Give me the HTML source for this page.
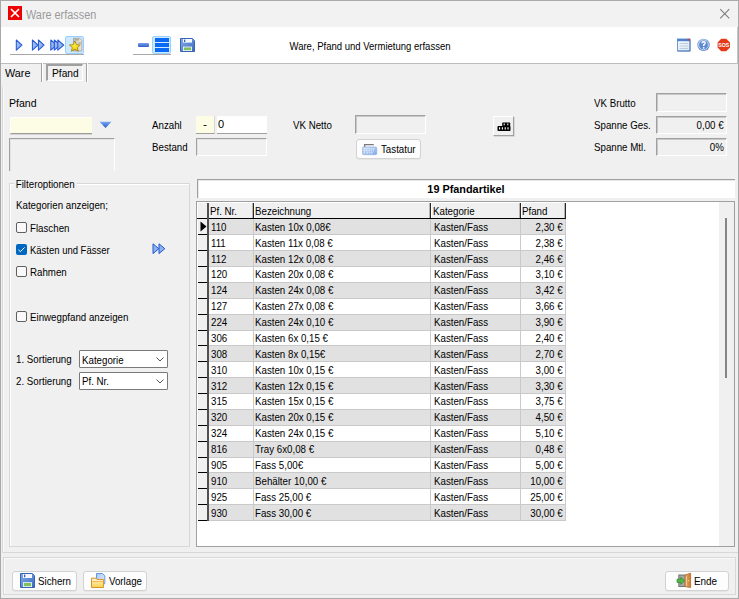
<!DOCTYPE html>
<html><head><meta charset="utf-8">
<style>
*{box-sizing:border-box;margin:0;padding:0}
html,body{width:739px;height:599px;overflow:hidden;background:#f0f0f0;font-family:"Liberation Sans",sans-serif;font-size:11px;color:#000}
.a{position:absolute}
.t{position:absolute;white-space:nowrap;line-height:13px;transform:scaleX(0.884);transform-origin:0 0}
.t.r{transform-origin:100% 0}
.t.c{transform-origin:50% 0}
.cb{position:absolute;width:11px;height:11px;border:1px solid #606060;border-radius:2px;background:#f9f9f9}
</style></head><body>
<div class="a" style="left:0;top:0;width:739px;height:599px;border:1px solid #a9a9a9"></div>
<!-- title bar -->
<div class="a" style="left:1px;top:1px;width:737px;height:26px;background:#f2f2f2"></div>

<div class="a" style="left:8px;top:6px;width:14px;height:14px;background:#ee0000"></div>

<svg class="a" style="left:8px;top:6px" width="14" height="14"><path d="M3 3 L11 11 M11 3 L3 11" stroke="#fff" stroke-width="1.7"/></svg>
<div class="t" style="left:26px;top:8px;font-size:12px;line-height:14px;color:#9a9a9a;transform:scaleX(0.905)">Ware erfassen</div>
<svg class="a" style="left:719px;top:8px" width="12" height="12"><path d="M1.2 1.2 L10.3 10.3 M10.3 1.2 L1.2 10.3" stroke="#7c7c7c" stroke-width="1.05"/></svg>
<!-- toolbar -->
<div class="a" style="left:1px;top:27px;width:737px;height:37px;background:#fff;border-bottom:1px solid #bdbdbd"></div>

<div class="a" style="left:10px;top:54px;width:74px;height:1px;background:#a8a8a8"></div>

<div class="a" style="left:133px;top:54px;width:38px;height:1px;background:#a8a8a8"></div>

<div class="a" style="left:65px;top:36px;width:19px;height:18px;background:#cde8ff;border:1px solid #9ad2ff;border-radius:2px"></div>

<div class="a" style="left:152px;top:36px;width:19px;height:18px;background:#cde8ff;border:1px solid #9ad2ff;border-radius:2px"></div>

<div class="a" style="left:138px;top:43px;width:11px;height:4px;background:linear-gradient(#7aa0e8,#2d60c8);border-radius:1px"></div>

<div class="a" style="left:155px;top:38px;width:14px;height:4px;background:#0a6af5"></div>

<div class="a" style="left:155px;top:43px;width:14px;height:4px;background:#0a6af5"></div>

<div class="a" style="left:155px;top:48px;width:14px;height:4px;background:#0a6af5"></div>


<svg class="a" style="left:0;top:0" width="200" height="60">
 <defs>
  <linearGradient id="ag" x1="0" y1="0" x2="1" y2="1"><stop offset="0" stop-color="#b4cdf6"/><stop offset="1" stop-color="#6e98e6"/></linearGradient>
 </defs>
 <path d="M16.3 40 L22.0 45.1 L16.3 50.2 Z" fill="url(#ag)" stroke="#2458d4" stroke-width="1.05" stroke-linejoin="round"/>
 <path d="M32.4 40 L38.1 45.1 L32.4 50.2 Z" fill="url(#ag)" stroke="#2458d4" stroke-width="1.05" stroke-linejoin="round"/><path d="M38.4 40 L44.099999999999994 45.1 L38.4 50.2 Z" fill="url(#ag)" stroke="#2458d4" stroke-width="1.05" stroke-linejoin="round"/>
 <path d="M50.800000000000004 40 L56.800000000000004 45.1 L50.800000000000004 50.2 Z" fill="url(#ag)" stroke="#2458d4" stroke-width="1.05" stroke-linejoin="round"/><path d="M54.300000000000004 40 L60.300000000000004 45.1 L54.300000000000004 50.2 Z" fill="url(#ag)" stroke="#2458d4" stroke-width="1.05" stroke-linejoin="round"/><path d="M57.800000000000004 40 L63.800000000000004 45.1 L57.800000000000004 50.2 Z" fill="url(#ag)" stroke="#2458d4" stroke-width="1.05" stroke-linejoin="round"/>
</svg>

<svg class="a" style="left:66px;top:36px" width="18" height="18">
 <defs><linearGradient id="sg" x1="0" y1="0" x2="0" y2="1"><stop offset="0" stop-color="#fff46a"/><stop offset="1" stop-color="#f0d000"/></linearGradient>
 <linearGradient id="dg" x1="0" y1="0" x2="1" y2="0"><stop offset="0" stop-color="#c8c0b4"/><stop offset="1" stop-color="#eee8de"/></linearGradient></defs>
 <path d="M7.5 2.2 L13.8 2.2 L15.8 4.2 L15.8 15 L7.5 15 Z" fill="url(#dg)" stroke="#9a948a" stroke-width="0.7"/>
 <path d="M9 3.8 L13 3.8 M12.5 7 L15 7" stroke="#8a8478" stroke-width="0.8"/>
 <path d="M8.8 5 L10.4 8.6 L14.2 9 L11.3 11.5 L12.2 15.2 L8.8 13.3 L5.4 15.2 L6.3 11.5 L3.4 9 L7.2 8.6 Z" fill="url(#sg)" stroke="#a08000" stroke-width="0.8" stroke-linejoin="round"/>
</svg>
<svg class="a" style="left:180px;top:38px" width="15" height="14">
 <defs><linearGradient id="fg" x1="0" y1="0" x2="1" y2="1"><stop offset="0" stop-color="#86aee8"/><stop offset="1" stop-color="#3b68c4"/></linearGradient></defs>
 <path d="M0.5 0.5 H12.3 L14.5 2.7 V13.5 H0.5 Z" fill="url(#fg)" stroke="#3a62b4" stroke-width="1"/>
 <rect x="3" y="1" width="9" height="3.6" fill="#f4f8ff"/>
 <rect x="4" y="1.6" width="1.3" height="2.4" fill="#3a62b4"/>
 <rect x="3" y="8.6" width="9" height="4.4" fill="#f4f8ff"/>
 <rect x="3.8" y="9.4" width="7.4" height="2.8" fill="#7cc060"/>
</svg>
<div class="t c" style="left:270px;width:200px;text-align:center;top:40px;transform:scaleX(0.865)">Ware, Pfand und Vermietung erfassen</div>
<svg class="a" style="left:677px;top:38px" width="14" height="14">
 <defs><linearGradient id="wg" x1="0" y1="0" x2="1" y2="1"><stop offset="0" stop-color="#f8fbff"/><stop offset="1" stop-color="#d8e6f6"/></linearGradient></defs>
 <rect x="0.5" y="1" width="12.5" height="12" fill="url(#wg)" stroke="#6a98d0" stroke-width="1"/>
 <rect x="0.5" y="1" width="12.5" height="2.2" fill="#4f84cc"/>
 <rect x="10.5" y="0.8" width="2.5" height="1.8" fill="#c84848"/>
 <path d="M2.5 5.5 H11 M2.5 8 H11 M2.5 10.5 H11" stroke="#b8c8dc" stroke-width="0.9"/>
 <path d="M1 13 H13 V1.5" stroke="#4a70a8" stroke-width="0.8" fill="none"/>
</svg>
<svg class="a" style="left:697px;top:38px" width="14" height="14">
 <defs><radialGradient id="hg" cx="0.4" cy="0.3" r="0.75"><stop offset="0" stop-color="#a8c6f0"/><stop offset="1" stop-color="#4a78c4"/></radialGradient></defs>
 <circle cx="6.5" cy="6.9" r="6.2" fill="url(#hg)"/>
 <circle cx="6.5" cy="6.9" r="4.9" fill="#5d8ad0" stroke="#dde8f8" stroke-width="0.8"/>
 <path d="M4.9 5.3 Q5 3.7 6.6 3.7 Q8.2 3.8 8.2 5.2 Q8.1 6.3 6.7 6.9 L6.7 8" fill="none" stroke="#fff" stroke-width="1.4"/>
 <circle cx="6.7" cy="9.8" r="0.85" fill="#fff"/>
</svg>
<svg class="a" style="left:717px;top:38px" width="14" height="14">
 <path d="M4.2 0.8 H9.2 L13 4.6 V9.4 L9.2 13.2 H4.2 L0.6 9.4 V4.6 Z" fill="#e43a1a"/>
 <text x="6.8" y="9.3" font-family="Liberation Sans" font-size="6" font-weight="bold" fill="#fff" text-anchor="middle" textLength="11" lengthAdjust="spacingAndGlyphs">SOS</text>
</svg>
<div class="a" style="left:737px;top:27px;width:1px;height:37px;background:#c4c4c4"></div>

<!-- tab strip -->
<div class="t" style="left:5px;top:67px;transform:scaleX(0.982)">Ware</div>
<div class="a" style="left:41px;top:63px;width:1px;height:19px;background:#a0a0a0"></div>

<div class="a" style="left:42px;top:63px;width:1px;height:19px;background:#fff"></div>

<div class="a" style="left:46px;top:64px;width:37px;height:17px;border-top:2px solid #a0a0a0;border-left:2px solid #a0a0a0;border-right:1px solid #fff;border-bottom:1px solid #fff"></div>

<div class="t" style="left:52px;top:67px;transform:scaleX(0.927)">Pfand</div>
<div class="a" style="left:86px;top:63px;width:1px;height:19px;background:#a0a0a0"></div>

<div class="a" style="left:87px;top:63px;width:1px;height:19px;background:#fff"></div>

<!-- main panel -->
<div class="a" style="left:2px;top:87px;width:736px;height:466px;border-left:1px solid #d8d8d8;border-bottom:1px solid #d8d8d8;box-shadow:inset 1px 0 0 #fafafa"></div>

<div class="t" style="left:9px;top:97px;transform:scaleX(0.960)">Pfand</div>
<div class="a" style="left:10px;top:117px;width:82px;height:17px;background:#fdfde6;border-top:1px solid #fff;border-left:1px solid #fff;border-bottom:1px solid #9c9c9c;box-shadow:0 1px 0 #d4d4d4"></div>

<svg class="a" style="left:99px;top:121px" width="13" height="8"><defs><linearGradient id="tg" x1="0" y1="0" x2="0" y2="1"><stop offset="0" stop-color="#7aa8f0"/><stop offset="1" stop-color="#1e58c8"/></linearGradient></defs><path d="M0.5 0.8 L12.5 0.8 L6.5 7 Z" fill="url(#tg)"/></svg>
<div class="a" style="left:9px;top:138px;width:106px;height:33px;border-top:1px solid #a0a0a0;border-left:1px solid #a0a0a0;border-right:1px solid #fff;box-shadow:inset 1px 1px 0 #e3e3e3"></div>


<div class="t" style="left:152px;top:119px">Anzahl</div>
<div class="a" style="left:196px;top:116px;width:19px;height:18px;background:#fdfde6;border-bottom:1px solid #a0a0a0;border-right:1px solid #d8d8d8"></div>

<div class="t" style="left:203px;top:118px;transform:scaleX(1.1)">-</div>
<div class="a" style="left:217px;top:116px;width:50px;height:18px;background:#fff;border-bottom:1px solid #a0a0a0"></div>

<div class="t" style="left:218px;top:118px;transform:none">0</div>
<div class="t" style="left:152px;top:141px">Bestand</div>
<div class="a" style="left:196px;top:138px;width:71px;height:18px;border-top:1px solid #a0a0a0;border-left:1px solid #a0a0a0;border-right:1px solid #fff;border-bottom:1px solid #fff;box-shadow:inset 1px 1px 0 #e3e3e3"></div>


<div class="t" style="left:293px;top:119px">VK Netto</div>
<div class="a" style="left:355px;top:115px;width:71px;height:19px;border-top:1px solid #a0a0a0;border-left:1px solid #a0a0a0;border-right:1px solid #fff;border-bottom:1px solid #fff;box-shadow:inset 1px 1px 0 #c8c8c8"></div>

<div class="a" style="left:356px;top:139px;width:65px;height:20px;background:#fdfdfd;border:1px solid #d2d2d2;border-radius:3px;box-shadow:0 1px 0 #e6e6e6"></div>

<svg class="a" style="left:362px;top:143px" width="16" height="13">
 <defs><linearGradient id="kbg" x1="0" y1="0" x2="1" y2="1"><stop offset="0" stop-color="#c8dcf6"/><stop offset="1" stop-color="#82a8e4"/></linearGradient></defs>
 <path d="M2.6 4.5 V1.6 H11.8" stroke="#7a7a7a" stroke-width="1.3" fill="none"/>
 <rect x="0.4" y="3.9" width="14.4" height="7.8" rx="1.2" fill="url(#kbg)" stroke="#90b2e4" stroke-width="0.6"/>
 <path d="M1.8 5.8 H13 M1.8 7.8 H12 M1.8 9.8 H3 M4.5 9.8 H11.5" stroke="#f4f8ff" stroke-width="0.9" stroke-dasharray="1.6 0.7"/>
</svg>
<div class="t" style="left:381px;top:143px">Tastatur</div>

<div class="a" style="left:493px;top:116px;width:21px;height:20px;background:#f0f0f0;border-top:1px solid #fff;border-left:1px solid #fff;border-right:1px solid #a0a0a0;border-bottom:1px solid #a0a0a0;box-shadow:1px 1px 0 #d8d8d8"></div>

<svg class="a" style="left:497px;top:122px" width="14" height="10">
 <rect x="5.2" y="0.5" width="8" height="4" rx="0.8" fill="#000"/>
 <rect x="0.5" y="4" width="13" height="5" rx="0.8" fill="#000"/>
 <path d="M7.2 1.6 V3.2 M10.8 1.6 V3.2 M2.6 5.2 V7.6 M5.4 5.2 V7.6 M8.2 5.2 V7.6 M11 5.2 V7.6" stroke="#fff" stroke-width="1.1"/>
</svg>

<div class="t" style="left:594px;top:97px">VK Brutto</div>
<div class="a" style="left:656px;top:93px;width:71px;height:19px;border-top:1px solid #a0a0a0;border-left:1px solid #a0a0a0;border-right:1px solid #fff;border-bottom:1px solid #fff;box-shadow:inset 1px 1px 0 #c8c8c8"></div>

<div class="t" style="left:594px;top:119px">Spanne Ges.</div>
<div class="a" style="left:656px;top:116px;width:71px;height:18px;border-top:1px solid #a0a0a0;border-left:1px solid #a0a0a0;border-right:1px solid #fff;border-bottom:1px solid #fff;box-shadow:inset 1px 1px 0 #c8c8c8"></div>

<div class="t r" style="right:15px;top:119px">0,00 €</div>
<div class="t" style="left:594px;top:141px">Spanne Mtl.</div>
<div class="a" style="left:656px;top:138px;width:71px;height:18px;border-top:1px solid #a0a0a0;border-left:1px solid #a0a0a0;border-right:1px solid #fff;border-bottom:1px solid #fff;box-shadow:inset 1px 1px 0 #c8c8c8"></div>

<div class="t r" style="right:15px;top:141px">0%</div>

<!-- filter group -->
<div class="a" style="left:9px;top:183px;width:181px;height:364px;border:1px solid #d8d8d8;box-shadow:inset 1px 1px 0 #fff"></div>

<div class="t" style="left:14px;top:178px;padding:0 2px;background:#f0f0f0">Filteroptionen</div>
<div class="t" style="left:16px;top:199px">Kategorien anzeigen;</div>
<div class="cb" style="left:16px;top:222px"></div>
<div class="t" style="left:30px;top:222px">Flaschen</div>
<div class="a" style="left:16px;top:244px;width:11px;height:11px;background:#0067c0;border-radius:2px"></div>

<svg class="a" style="left:16px;top:244px" width="11" height="11"><path d="M2.4 5.8 L4.4 7.7 L8.6 3.4" stroke="#fff" stroke-width="1" fill="none"/></svg>
<div class="t" style="left:30px;top:244px;transform:scaleX(0.862)">Kästen und Fässer</div>
<svg class="a" style="left:152px;top:243px" width="14" height="12">
 <path d="M1.0 0.8 L6.8 5.7 L1.0 10.6 Z" fill="#8fb2ee" stroke="#1f56d0" stroke-width="1" stroke-linejoin="round"/><path d="M7.0 0.8 L12.8 5.7 L7.0 10.6 Z" fill="#8fb2ee" stroke="#1f56d0" stroke-width="1" stroke-linejoin="round"/>
</svg>
<div class="cb" style="left:16px;top:266px"></div>
<div class="t" style="left:30px;top:266px">Rahmen</div>
<div class="cb" style="left:16px;top:311px"></div>
<div class="t" style="left:30px;top:311px">Einwegpfand anzeigen</div>
<div class="t" style="left:16px;top:353px">1. Sortierung</div>
<div class="a" style="left:79px;top:350px;width:89px;height:18px;border:1px solid #7a7a7a;border-radius:1px;background:#fff"></div>

<div class="t" style="left:82px;top:354px">Kategorie</div>
<svg class="a" style="left:156px;top:357px" width="9" height="6"><path d="M0.5 0.5 L4 4 L7.5 0.5" stroke="#404040" stroke-width="0.9" fill="none"/></svg>
<div class="t" style="left:16px;top:375px">2. Sortierung</div>
<div class="a" style="left:79px;top:372px;width:89px;height:18px;border:1px solid #7a7a7a;border-radius:1px;background:#fff"></div>

<div class="t" style="left:82px;top:375px">Pf. Nr.</div>
<svg class="a" style="left:156px;top:379px" width="9" height="6"><path d="M0.5 0.5 L4 4 L7.5 0.5" stroke="#404040" stroke-width="0.9" fill="none"/></svg>

<!-- title panel -->
<div class="a" style="left:197px;top:179px;width:538px;height:19px;background:#fff;border-top:1px solid #a0a0a0;border-left:1px solid #a0a0a0;box-shadow:inset 1px 1px 0 #e8e8e8"></div>

<div class="t c" style="left:366px;width:200px;text-align:center;top:183px;font-weight:bold;transform:scaleX(0.987)">19 Pfandartikel</div>

<!-- grid -->
<div class="a" style="left:196px;top:201px;width:539px;height:346px;background:#fff;border:1px solid #a0a0a0"></div>

<div class="a" style="left:197px;top:202px;width:369px;height:16px;background:#f0f0f0;border-top:1px solid #fff;border-left:1px solid #fff"></div>

<div class="a" style="left:197px;top:219px;width:11px;height:302px;background:#f0f0f0;border-left:1px solid #fff"></div>

<div class="a" style="left:197px;top:218px;width:369px;height:1px;background:#000"></div>

<div class="a" style="left:209px;top:219px;width:356px;height:15px;background:#e1e1e1"></div>
<div class="a" style="left:209px;top:234px;width:356px;height:1px;background:#c9c9c9"></div>
<div class="a" style="left:198px;top:234px;width:10px;height:1px;background:#000"></div>
<div class="t " style="left:211px;top:221px;">110</div>
<div class="t " style="left:255px;top:221px;">Kasten 10x 0,08€</div>
<div class="t " style="left:434px;top:221px;">Kasten/Fass</div>
<div class="t r " style="right:176px;top:221px;">2,30 €</div>
<div class="a" style="left:209px;top:235px;width:356px;height:15px;background:#ffffff"></div>
<div class="a" style="left:209px;top:250px;width:356px;height:1px;background:#c9c9c9"></div>
<div class="a" style="left:198px;top:250px;width:10px;height:1px;background:#000"></div>
<div class="t " style="left:211px;top:237px;">111</div>
<div class="t " style="left:255px;top:237px;">Kasten 11x 0,08 €</div>
<div class="t " style="left:434px;top:237px;">Kasten/Fass</div>
<div class="t r " style="right:176px;top:237px;">2,38 €</div>
<div class="a" style="left:209px;top:251px;width:356px;height:15px;background:#e1e1e1"></div>
<div class="a" style="left:209px;top:266px;width:356px;height:1px;background:#c9c9c9"></div>
<div class="a" style="left:198px;top:266px;width:10px;height:1px;background:#000"></div>
<div class="t " style="left:211px;top:253px;">112</div>
<div class="t " style="left:255px;top:253px;">Kasten 12x 0,08 €</div>
<div class="t " style="left:434px;top:253px;">Kasten/Fass</div>
<div class="t r " style="right:176px;top:253px;">2,46 €</div>
<div class="a" style="left:209px;top:267px;width:356px;height:15px;background:#ffffff"></div>
<div class="a" style="left:209px;top:282px;width:356px;height:1px;background:#c9c9c9"></div>
<div class="a" style="left:198px;top:282px;width:10px;height:1px;background:#000"></div>
<div class="t " style="left:211px;top:268px;">120</div>
<div class="t " style="left:255px;top:268px;">Kasten 20x 0,08 €</div>
<div class="t " style="left:434px;top:268px;">Kasten/Fass</div>
<div class="t r " style="right:176px;top:268px;">3,10 €</div>
<div class="a" style="left:209px;top:283px;width:356px;height:15px;background:#e1e1e1"></div>
<div class="a" style="left:209px;top:298px;width:356px;height:1px;background:#c9c9c9"></div>
<div class="a" style="left:198px;top:298px;width:10px;height:1px;background:#000"></div>
<div class="t " style="left:211px;top:284px;">124</div>
<div class="t " style="left:255px;top:284px;">Kasten 24x 0,08 €</div>
<div class="t " style="left:434px;top:284px;">Kasten/Fass</div>
<div class="t r " style="right:176px;top:284px;">3,42 €</div>
<div class="a" style="left:209px;top:299px;width:356px;height:15px;background:#ffffff"></div>
<div class="a" style="left:209px;top:314px;width:356px;height:1px;background:#c9c9c9"></div>
<div class="a" style="left:198px;top:314px;width:10px;height:1px;background:#000"></div>
<div class="t " style="left:211px;top:300px;">127</div>
<div class="t " style="left:255px;top:300px;">Kasten 27x 0,08 €</div>
<div class="t " style="left:434px;top:300px;">Kasten/Fass</div>
<div class="t r " style="right:176px;top:300px;">3,66 €</div>
<div class="a" style="left:209px;top:315px;width:356px;height:15px;background:#e1e1e1"></div>
<div class="a" style="left:209px;top:330px;width:356px;height:1px;background:#c9c9c9"></div>
<div class="a" style="left:198px;top:330px;width:10px;height:1px;background:#000"></div>
<div class="t " style="left:211px;top:316px;">224</div>
<div class="t " style="left:255px;top:316px;">Kasten 24x 0,10 €</div>
<div class="t " style="left:434px;top:316px;">Kasten/Fass</div>
<div class="t r " style="right:176px;top:316px;">3,90 €</div>
<div class="a" style="left:209px;top:331px;width:356px;height:14px;background:#ffffff"></div>
<div class="a" style="left:209px;top:345px;width:356px;height:1px;background:#c9c9c9"></div>
<div class="a" style="left:198px;top:345px;width:10px;height:1px;background:#000"></div>
<div class="t " style="left:211px;top:332px;">306</div>
<div class="t " style="left:255px;top:332px;">Kasten 6x 0,15 €</div>
<div class="t " style="left:434px;top:332px;">Kasten/Fass</div>
<div class="t r " style="right:176px;top:332px;">2,40 €</div>
<div class="a" style="left:209px;top:346px;width:356px;height:15px;background:#e1e1e1"></div>
<div class="a" style="left:209px;top:361px;width:356px;height:1px;background:#c9c9c9"></div>
<div class="a" style="left:198px;top:361px;width:10px;height:1px;background:#000"></div>
<div class="t " style="left:211px;top:348px;">308</div>
<div class="t " style="left:255px;top:348px;">Kasten 8x 0,15€</div>
<div class="t " style="left:434px;top:348px;">Kasten/Fass</div>
<div class="t r " style="right:176px;top:348px;">2,70 €</div>
<div class="a" style="left:209px;top:362px;width:356px;height:15px;background:#ffffff"></div>
<div class="a" style="left:209px;top:377px;width:356px;height:1px;background:#c9c9c9"></div>
<div class="a" style="left:198px;top:377px;width:10px;height:1px;background:#000"></div>
<div class="t " style="left:211px;top:364px;">310</div>
<div class="t " style="left:255px;top:364px;">Kasten 10x 0,15 €</div>
<div class="t " style="left:434px;top:364px;">Kasten/Fass</div>
<div class="t r " style="right:176px;top:364px;">3,00 €</div>
<div class="a" style="left:209px;top:378px;width:356px;height:15px;background:#e1e1e1"></div>
<div class="a" style="left:209px;top:393px;width:356px;height:1px;background:#c9c9c9"></div>
<div class="a" style="left:198px;top:393px;width:10px;height:1px;background:#000"></div>
<div class="t " style="left:211px;top:380px;">312</div>
<div class="t " style="left:255px;top:380px;">Kasten 12x 0,15 €</div>
<div class="t " style="left:434px;top:380px;">Kasten/Fass</div>
<div class="t r " style="right:176px;top:380px;">3,30 €</div>
<div class="a" style="left:209px;top:394px;width:356px;height:15px;background:#ffffff"></div>
<div class="a" style="left:209px;top:409px;width:356px;height:1px;background:#c9c9c9"></div>
<div class="a" style="left:198px;top:409px;width:10px;height:1px;background:#000"></div>
<div class="t " style="left:211px;top:395px;">315</div>
<div class="t " style="left:255px;top:395px;">Kasten 15x 0,15 €</div>
<div class="t " style="left:434px;top:395px;">Kasten/Fass</div>
<div class="t r " style="right:176px;top:395px;">3,75 €</div>
<div class="a" style="left:209px;top:410px;width:356px;height:15px;background:#e1e1e1"></div>
<div class="a" style="left:209px;top:425px;width:356px;height:1px;background:#c9c9c9"></div>
<div class="a" style="left:198px;top:425px;width:10px;height:1px;background:#000"></div>
<div class="t " style="left:211px;top:411px;">320</div>
<div class="t " style="left:255px;top:411px;">Kasten 20x 0,15 €</div>
<div class="t " style="left:434px;top:411px;">Kasten/Fass</div>
<div class="t r " style="right:176px;top:411px;">4,50 €</div>
<div class="a" style="left:209px;top:426px;width:356px;height:15px;background:#ffffff"></div>
<div class="a" style="left:209px;top:441px;width:356px;height:1px;background:#c9c9c9"></div>
<div class="a" style="left:198px;top:441px;width:10px;height:1px;background:#000"></div>
<div class="t " style="left:211px;top:427px;">324</div>
<div class="t " style="left:255px;top:427px;">Kasten 24x 0,15 €</div>
<div class="t " style="left:434px;top:427px;">Kasten/Fass</div>
<div class="t r " style="right:176px;top:427px;">5,10 €</div>
<div class="a" style="left:209px;top:442px;width:356px;height:15px;background:#e1e1e1"></div>
<div class="a" style="left:209px;top:457px;width:356px;height:1px;background:#c9c9c9"></div>
<div class="a" style="left:198px;top:457px;width:10px;height:1px;background:#000"></div>
<div class="t " style="left:211px;top:443px;">816</div>
<div class="t " style="left:255px;top:443px;">Tray 6x0,08 €</div>
<div class="t " style="left:434px;top:443px;">Kasten/Fass</div>
<div class="t r " style="right:176px;top:443px;">0,48 €</div>
<div class="a" style="left:209px;top:458px;width:356px;height:14px;background:#ffffff"></div>
<div class="a" style="left:209px;top:472px;width:356px;height:1px;background:#c9c9c9"></div>
<div class="a" style="left:198px;top:472px;width:10px;height:1px;background:#000"></div>
<div class="t " style="left:211px;top:459px;">905</div>
<div class="t " style="left:255px;top:459px;">Fass 5,00€</div>
<div class="t " style="left:434px;top:459px;">Kasten/Fass</div>
<div class="t r " style="right:176px;top:459px;">5,00 €</div>
<div class="a" style="left:209px;top:473px;width:356px;height:15px;background:#e1e1e1"></div>
<div class="a" style="left:209px;top:488px;width:356px;height:1px;background:#c9c9c9"></div>
<div class="a" style="left:198px;top:488px;width:10px;height:1px;background:#000"></div>
<div class="t " style="left:211px;top:475px;">910</div>
<div class="t " style="left:255px;top:475px;">Behälter 10,00 €</div>
<div class="t " style="left:434px;top:475px;">Kasten/Fass</div>
<div class="t r " style="right:176px;top:475px;">10,00 €</div>
<div class="a" style="left:209px;top:489px;width:356px;height:15px;background:#ffffff"></div>
<div class="a" style="left:209px;top:504px;width:356px;height:1px;background:#c9c9c9"></div>
<div class="a" style="left:198px;top:504px;width:10px;height:1px;background:#000"></div>
<div class="t " style="left:211px;top:491px;">925</div>
<div class="t " style="left:255px;top:491px;">Fass 25,00 €</div>
<div class="t " style="left:434px;top:491px;">Kasten/Fass</div>
<div class="t r " style="right:176px;top:491px;">25,00 €</div>
<div class="a" style="left:209px;top:505px;width:356px;height:15px;background:#e1e1e1"></div>
<div class="a" style="left:209px;top:520px;width:356px;height:1px;background:#c9c9c9"></div>
<div class="a" style="left:198px;top:520px;width:10px;height:1px;background:#000"></div>
<div class="t " style="left:211px;top:507px;">930</div>
<div class="t " style="left:255px;top:507px;">Fass 30,00 €</div>
<div class="t " style="left:434px;top:507px;">Kasten/Fass</div>
<div class="t r " style="right:176px;top:507px;">30,00 €</div>

<svg class="a" style="left:200px;top:221px" width="7" height="11"><path d="M0.5 0.5 L6.5 5.5 L0.5 10.5 Z" fill="#000"/></svg>
<div class="t" style="left:210px;top:205px">Pf. Nr.</div>
<div class="t" style="left:255px;top:205px">Bezeichnung</div>
<div class="t" style="left:433px;top:205px">Kategorie</div>
<div class="t" style="left:522px;top:205px">Pfand</div>
<div class="a" style="left:207px;top:203px;width:2px;height:318px;background:#505050"></div>

<div class="a" style="left:253px;top:219px;width:1px;height:302px;background:#cacaca"></div>

<div class="a" style="left:430px;top:219px;width:1px;height:302px;background:#cacaca"></div>

<div class="a" style="left:520px;top:219px;width:1px;height:302px;background:#cacaca"></div>

<div class="a" style="left:565px;top:219px;width:1px;height:302px;background:#cacaca"></div>

<div class="a" style="left:253px;top:203px;width:1px;height:15px;background:#282828"></div>

<div class="a" style="left:252px;top:203px;width:1px;height:15px;background:#b4b4b4"></div>

<div class="a" style="left:254px;top:203px;width:1px;height:15px;background:#fff"></div>

<div class="a" style="left:430px;top:203px;width:1px;height:15px;background:#282828"></div>

<div class="a" style="left:429px;top:203px;width:1px;height:15px;background:#b4b4b4"></div>

<div class="a" style="left:431px;top:203px;width:1px;height:15px;background:#fff"></div>

<div class="a" style="left:520px;top:203px;width:1px;height:15px;background:#282828"></div>

<div class="a" style="left:519px;top:203px;width:1px;height:15px;background:#b4b4b4"></div>

<div class="a" style="left:521px;top:203px;width:1px;height:15px;background:#fff"></div>

<div class="a" style="left:565px;top:203px;width:1px;height:16px;background:#282828"></div>

<div class="a" style="left:564px;top:203px;width:1px;height:15px;background:#b4b4b4"></div>

<!-- scrollbar -->
<div class="a" style="left:719px;top:202px;width:15px;height:344px;background:#f0f0f0"></div>

<div class="a" style="left:725px;top:218px;width:2px;height:160px;background:#858585"></div>


<!-- bottom panel -->
<div class="a" style="left:3px;top:557px;width:733px;height:38px;border:1px solid #d8d8d8;box-shadow:inset 1px 1px 0 #fafafa"></div>

<div class="a" style="left:12px;top:571px;width:65px;height:20px;background:#fdfdfd;border:1px solid #d2d2d2;border-radius:3px;box-shadow:0 1px 0 #e6e6e6"></div>

<svg class="a" style="left:20px;top:573px" width="15" height="15">
 <defs><linearGradient id="fg2" x1="0" y1="0" x2="1" y2="1"><stop offset="0" stop-color="#86aee8"/><stop offset="1" stop-color="#3b68c4"/></linearGradient></defs>
 <path d="M0.5 0.5 H12.3 L14.5 2.7 V14.5 H0.5 Z" fill="url(#fg2)" stroke="#3a62b4" stroke-width="1"/>
 <rect x="3" y="1" width="9" height="4" fill="#f4f8ff"/>
 <rect x="4" y="1.6" width="1.3" height="2.6" fill="#3a62b4"/>
 <rect x="3" y="9.2" width="9" height="4.8" fill="#f4f8ff"/>
 <rect x="3.8" y="10" width="7.4" height="3.2" fill="#7cc060"/>
</svg>
<div class="t" style="left:38px;top:575px">Sichern</div>
<div class="a" style="left:83px;top:571px;width:64px;height:20px;background:#fdfdfd;border:1px solid #d2d2d2;border-radius:3px;box-shadow:0 1px 0 #e6e6e6"></div>

<svg class="a" style="left:90px;top:573px" width="16" height="16">
 <defs><linearGradient id="dcg" x1="0" y1="0" x2="1" y2="1"><stop offset="0" stop-color="#a8c8f4"/><stop offset="1" stop-color="#e4efff"/></linearGradient>
 <linearGradient id="flg" x1="0" y1="0" x2="0" y2="1"><stop offset="0" stop-color="#fff6e0"/><stop offset="1" stop-color="#f6d448"/></linearGradient></defs>
 <path d="M6.5 0.5 H12.5 L14.8 2.8 V10.8 H6.5 Z" fill="url(#dcg)" stroke="#5a8ee0" stroke-width="0.9"/>
 <path d="M1.5 5.2 H6 L7 6.4 H13.4 V14.5 H1.5 Z" fill="url(#flg)" stroke="#d8902c" stroke-width="1"/>
 <path d="M2.2 8.6 H12.8" stroke="#f0b040" stroke-width="0.9"/>
</svg>
<div class="t" style="left:109px;top:575px">Vorlage</div>
<div class="a" style="left:665px;top:571px;width:64px;height:20px;background:#fdfdfd;border:1px solid #d2d2d2;border-radius:3px;box-shadow:0 1px 0 #e6e6e6"></div>

<svg class="a" style="left:676px;top:572px" width="16" height="17">
 <defs><linearGradient id="drg" x1="0" y1="0" x2="1" y2="0"><stop offset="0" stop-color="#e8b070"/><stop offset="1" stop-color="#c87830"/></linearGradient></defs>
 <rect x="2.8" y="3" width="6.4" height="11.5" fill="#a8a8a8" stroke="#6a6a6a" stroke-width="0.9"/>
 <path d="M9 3 L14.6 1.2 V15.5 L9 14.6 Z" fill="url(#drg)" stroke="#b06a28" stroke-width="0.8"/>
 <path d="M10.5 4.5 V13.5" stroke="#f4d0a0" stroke-width="0.9"/>
 <rect x="12" y="8" width="1.3" height="1.3" fill="#f8d040"/>
 <path d="M1 7.2 H4.8 V5.2 L8.6 8.8 L4.8 12.4 V10.4 H1 Z" fill="#52b84a" stroke="#2a8a2a" stroke-width="0.7" stroke-linejoin="round"/>
</svg>
<div class="t" style="left:694px;top:575px;transform:scaleX(0.9)">Ende</div>
</body></html>
